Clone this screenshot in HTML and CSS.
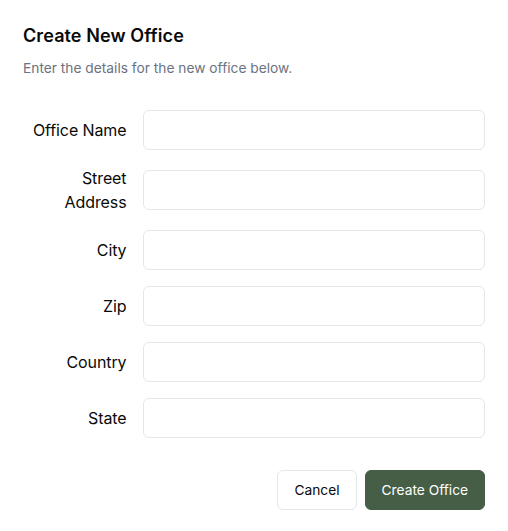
FILE: index.html
```html
<!DOCTYPE html>
<html>
<head>
<meta charset="utf-8">
<link rel="stylesheet" href="styles.css">
</head>
<body>
<div class="dialog">
  <div class="header">
    <h2 class="title">Create New Office</h2>
    <p class="desc">Enter the details for the new office below.</p>
  </div>
  <form class="form">
    <label class="label">Office Name</label><input class="input" type="text">
    <label class="label">Street<br>Address</label><input class="input" type="text">
    <label class="label">City</label><input class="input" type="text">
    <label class="label">Zip</label><input class="input" type="text">
    <label class="label">Country</label><input class="input" type="text">
    <label class="label">State</label><input class="input" type="text">
  </form>
  <div class="footer">
    <button class="btn btn-outline" type="button">Cancel</button>
    <button class="btn btn-primary" type="button">Create Office</button>
  </div>
</div>
</body>
</html>
```
FILE: styles.css
```css
* { box-sizing: border-box; }
html, body { margin: 0; padding: 0; background: #fff; }
body { font-family: Inter, "Noto Sans", sans-serif; color: #0a0a0a; }
.dialog {
  width: 508px;
  padding: 22px 23px 21px 23px;
}
.header { display: flex; flex-direction: column; gap: 8px; }
.title {
  margin: 0;
  font-size: 18px;
  line-height: 28px;
  font-weight: 600;
  letter-spacing: 0.1px;
}
.desc {
  margin: 0;
  font-size: 13.75px;
  line-height: 20px;
  color: #6b7280;
}
.form {
  display: grid;
  grid-template-columns: repeat(4, 1fr);
  align-items: center;
  gap: 16px;
  padding: 16px 0;
  margin-top: 16px;
}
.label {
  text-align: right;
  font-size: 16px;
  line-height: 24px;
  font-weight: 400;
  letter-spacing: -0.1px;
}
.input {
  grid-column: span 3;
  height: 40px;
  border: 1px solid #e5e7eb;
  border-radius: 6px;
  background: #fff;
  font: inherit;
}
.footer {
  display: flex;
  justify-content: flex-end;
  gap: 8px;
  margin-top: 16px;
}
.btn {
  height: 40px;
  padding: 0 16px;
  border-radius: 6px;
  font-family: Inter, "Noto Sans", sans-serif;
  font-size: 13.75px;
  font-weight: 400;
  cursor: pointer;
}
.btn-outline {
  background: #fff;
  border: 1px solid #e5e7eb;
  color: #0a0a0a;
}
.btn-primary {
  background: #455e45;
  border: 1px solid #455e45;
  color: #fff;
}
```
